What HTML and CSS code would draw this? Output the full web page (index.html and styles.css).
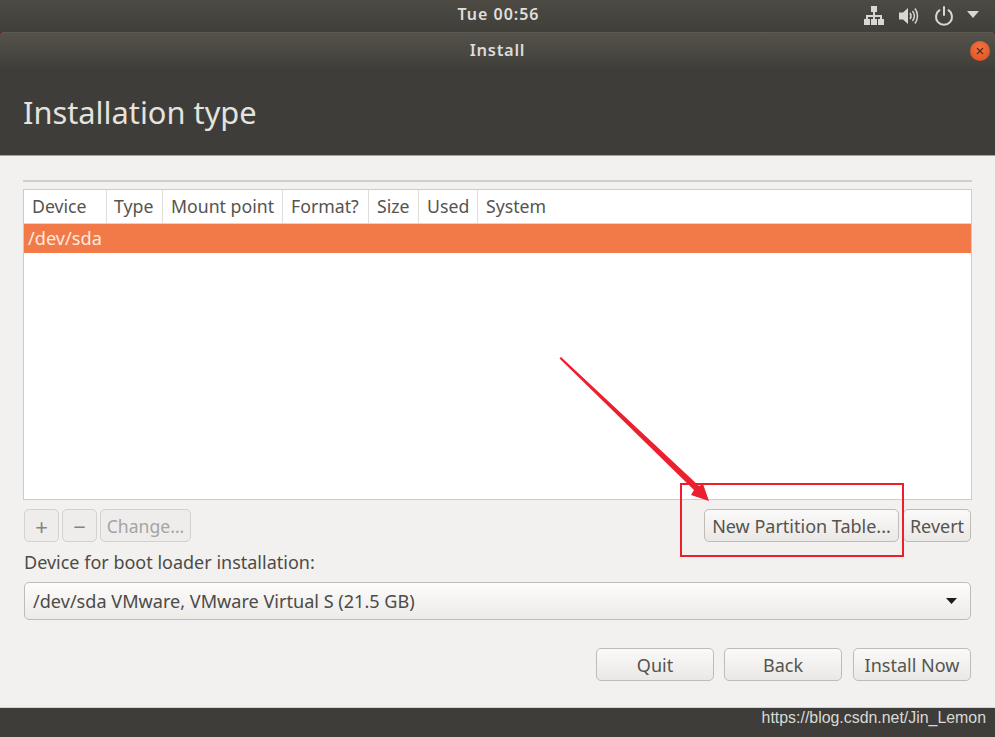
FILE: index.html
```html
<!DOCTYPE html>
<html lang="en">
<head>
<meta charset="utf-8">
<title>Install</title>
<link rel="stylesheet" href="styles.css">
</head>
<body>
<div class="screen">
  <div class="topbar">
    <div class="clock">Tue 00:56</div>
    <div class="tray">
      <svg class="tray-net" width="20" height="20" viewBox="0 0 20 20"><path fill="#d8d7d3" d="M7 0h6v6h-2v3h7v4h2v6h-6v-6h2v-2H11v2h2v6H7v-6h2v-2H4v2h2v6H0v-6h2V9h7V6H7z"/></svg>
      <svg class="tray-vol" width="20" height="20" viewBox="0 0 20 20"><path fill="#d8d7d3" d="M0 6.500h4L9 2v16l-5-4.500H0z"/><path fill="none" stroke="#d8d7d3" stroke-width="1.500" d="M11 7c1.300 1.800 1.300 4.200 0 6M13.500 5c2.300 3 2.300 7 0 10M16 2.500c3.300 4.500 3.300 10.500 0 15"/></svg>
      <svg class="tray-pow" width="20" height="20" viewBox="0 0 20 20"><path fill="none" stroke="#d8d7d3" stroke-width="2" stroke-linecap="round" d="M5.500 4.200a8 8 0 1 0 9 0M10 1v8"/></svg>
      <svg class="tray-arrow" width="12" height="7" viewBox="0 0 12 7"><path fill="#d8d7d3" d="M0 0h12L6 7z"/></svg>
    </div>
  </div>
  <div class="window">
    <div class="titlebar">
      <div class="title">Install</div>
      <div class="close"><svg width="8" height="8" viewBox="0 0 8 8"><path stroke="#5a2a15" stroke-width="1.300" d="M1 1l6 6M7 1L1 7"/></svg></div>
    </div>
    <div class="header"><h1 class="heading">Installation type</h1></div>
    <div class="content">
      <div class="rule"></div>
      <div class="table">
        <div class="thead">
          <div class="th th-device">Device</div>
          <div class="th th-type">Type</div>
          <div class="th th-mount">Mount point</div>
          <div class="th th-format">Format?</div>
          <div class="th th-size">Size</div>
          <div class="th th-used">Used</div>
          <div class="th th-system">System</div>
        </div>
        <div class="row-selected">/dev/sda</div>
      </div>
      <div class="actions">
        <button class="btn btn-icon" disabled>+</button>
        <button class="btn btn-icon" disabled>−</button>
        <button class="btn btn-change" disabled>Change...</button>
        <span class="spacer"></span>
        <button class="btn btn-new">New Partition Table...</button>
        <button class="btn btn-revert">Revert</button>
      </div>
      <div class="boot-label">Device for boot loader installation:</div>
      <div class="combo">
        <span>/dev/sda VMware, VMware Virtual S (21.5 GB)</span>
        <svg width="11" height="6" viewBox="0 0 11 6"><path fill="#1c1c1c" d="M0 0h11L5.500 6z"/></svg>
      </div>
      <div class="footer-buttons">
        <button class="btn btn-foot">Quit</button>
        <button class="btn btn-foot btn-back">Back</button>
        <button class="btn btn-foot">Install Now</button>
      </div>
    </div>
    <div class="bottombar"><span class="watermark">https://blog.csdn.net/Jin_Lemon</span></div>
  </div>
  <svg class="annotation" width="995" height="737" viewBox="0 0 995 737">
    <rect x="681" y="484" width="222" height="72" fill="none" stroke="#ec1f2e" stroke-width="2"/>
    <path d="M559.500 358.500L561 357L699 486l4-2 6 17-18-6 3-5z" fill="#ec1f2e"/>
  </svg>
</div>
</body>
</html>
```
FILE: styles.css
```css
* { box-sizing: border-box; }
html, body { margin: 0; padding: 0; }
body { font-family: "Noto Sans", "Open Sans", sans-serif; color: #3d3c38; background: #f2f1ef; }
.screen { position: relative; width: 995px; height: 737px; overflow: hidden; display: flex; flex-direction: column; }

.topbar { height: 32px; flex: none; position: relative; background: linear-gradient(#4c4a43, #403f3a); display: flex; align-items: center; justify-content: center; padding: 0 0 4px 2px; }
.clock { color: #e0dfdb; font-size: 16px; font-weight: 600; letter-spacing: 1px; }
.tray { position: absolute; right: 16px; top: 5px; height: 22px; display: flex; align-items: center; }
.tray-net { margin-right: 15px; }
.tray-vol { margin-right: 15px; }
.tray-pow { margin-right: 13px; }
.tray-arrow { margin-top: -4px; }

.window { flex: 1; display: flex; flex-direction: column; min-height: 0; background: #5e2a32; }
.titlebar { height: 36px; flex: none; position: relative; display: flex; align-items: center; justify-content: center; background: linear-gradient(#55524b, #403f3a); border-top: 1px solid #5d5a52; border-radius: 4px 4px 0 0; padding-bottom: 2px; }
.title { color: #dcdbd7; font-size: 16.500px; font-weight: 600; letter-spacing: 0.7px; }
.close { position: absolute; right: 5px; top: 8px; width: 20px; height: 20px; border-radius: 50%; background: radial-gradient(circle at 50% 35%, #f07445, #df4b1c); display: flex; align-items: center; justify-content: center; }

.header { height: 88px; flex: none; background: #3e3d39; border-bottom: 1px solid #a5a4a0; padding: 24px 0 0 23px; }
.heading { margin: 0; font-size: 30.800px; font-weight: 400; line-height: 40px; color: #e4e3df; }

.content { flex: 1; padding: 24px 23px 0 24px; min-height: 0; background: #f2f1ef; }
.rule { height: 2px; background: #cfcec9; margin-left: -1px; margin-bottom: 7px; }
.table { height: 311px; background: #fff; border: 1px solid #cdccc8; margin-left: -1px; }
.thead { height: 34px; display: flex; border-bottom: 1px solid #d8d7d3; }
.th { font-size: 17.700px; line-height: 33px; padding-left: 8px; color: #55544f; border-right: 1px solid #dededa; white-space: nowrap; }
.th-device { width: 83px; }
.th-type { width: 56px; padding-left: 7px; }
.th-mount { width: 120px; }
.th-format { width: 86px; }
.th-size { width: 50px; }
.th-used { width: 59px; }
.th-system { flex: 1; border-right: 0; }
.row-selected { height: 29px; background: #f27a48; color: #fde9df; font-size: 18.200px; line-height: 29px; padding-left: 4px; }

.actions { display: flex; align-items: center; margin: 9px 1px 0 0; height: 33px; }
.spacer { flex: 1; }
.btn { font-family: inherit; height: 33px; padding: 0; border: 1px solid #bdbcb7; border-radius: 5px; background: linear-gradient(#fbfafa, #e9e8e5); color: #55544f; font-size: 18px; white-space: nowrap; }
.btn:disabled { background: #eeedeb; border-color: #d2d1cd; color: #a5a4a0; }
.btn-icon { width: 35px; margin-right: 3px; font-size: 22px; }
.btn:disabled.btn-icon { color: #85847f; }
.btn-change { width: 91px; font-size: 17.600px; }
.btn-new { width: 195px; }
.btn-revert { width: 68px; margin-left: 4px; }

.boot-label { margin-top: 8px; font-size: 18px; line-height: 24px; color: #4c4b47; }
.combo { margin: 8px 1px 0 0; height: 38px; border: 1px solid #bdbcb7; border-radius: 5px; background: linear-gradient(#fdfcfc, #ecebe8); display: flex; align-items: center; justify-content: space-between; padding: 0 13px 0 8px; font-size: 18.100px; color: #4c4b47; }

.footer-buttons { display: flex; justify-content: flex-end; gap: 10px; margin: 28px 1px 0 0; }
.btn-foot { width: 118px; }
.btn-back { margin-right: 1px; }

.bottombar { height: 30px; flex: none; background: #3e3d39; border-top: 1px solid #d5d4d0; display: flex; justify-content: flex-end; padding: 0 9px 0 0; }
.watermark { font-family: "Liberation Sans", Arial, sans-serif; font-size: 15.900px; line-height: 20px; color: #d9d9d6; }

.annotation { position: absolute; left: 0; top: 0; pointer-events: none; }
```
